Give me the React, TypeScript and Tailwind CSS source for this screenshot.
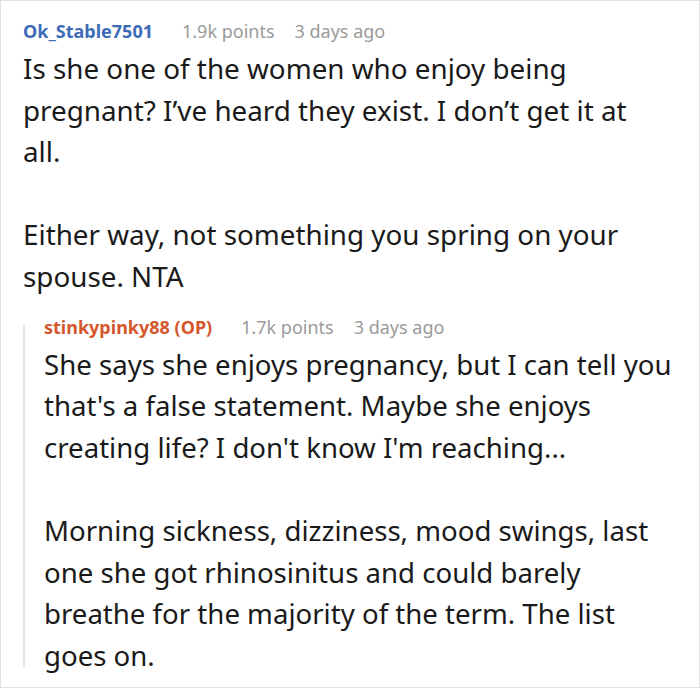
export default function App() {
  return (
    <div className="w-[700px] h-[688px] bg-white border border-[#e0e0e0] overflow-hidden" style={{ fontFamily: '"Noto Sans", "Open Sans", sans-serif' }}>
      <div className="pl-[22px] pt-[17px]">
        <div className="flex items-center h-[26px] text-[18px] leading-[26px] whitespace-nowrap">
          <span className="font-bold text-[#3d6cb6]">Ok_Stable7501</span>
          <span className="ml-[29px] text-[#9a9a9a]">1.9k points</span>
          <span className="ml-[20px] text-[#9a9a9a]">3 days ago</span>
        </div>
        <div className="mt-[4px] w-[645px] text-[27.8px] leading-[41.6px] text-[#1a1a1a]">
          Is she one of the women who enjoy being pregnant? I’ve heard they exist. I don’t get it at all.
          <br />
          <br />
          Either way, not something you spring on your spouse. NTA
        </div>
        <div className="mt-[16px] flex">
          <div className="mt-[11px] h-[343px] w-[2px] shrink-0 bg-[#e4e4e4]" />
          <div className="pl-[19px]">
            <div className="flex items-center h-[26px] text-[18px] leading-[26px] whitespace-nowrap">
              <span className="font-bold text-[#d4572b]">stinkypinky88 (OP)</span>
              <span className="ml-[29px] text-[#9a9a9a]">1.7k points</span>
              <span className="ml-[20px] text-[#9a9a9a]">3 days ago</span>
            </div>
            <div className="mt-[4px] w-[640px] text-[27.6px] leading-[41.6px] text-[#1a1a1a]">
              She says she enjoys pregnancy, but I can tell you that's a false statement. Maybe she enjoys creating life? I don't know I'm reaching...
              <br />
              <br />
              Morning sickness, dizziness, mood swings, last one she got rhinosinitus and could barely breathe for the majority of the term. The list goes on.
            </div>
          </div>
        </div>
      </div>
    </div>
  );
}
